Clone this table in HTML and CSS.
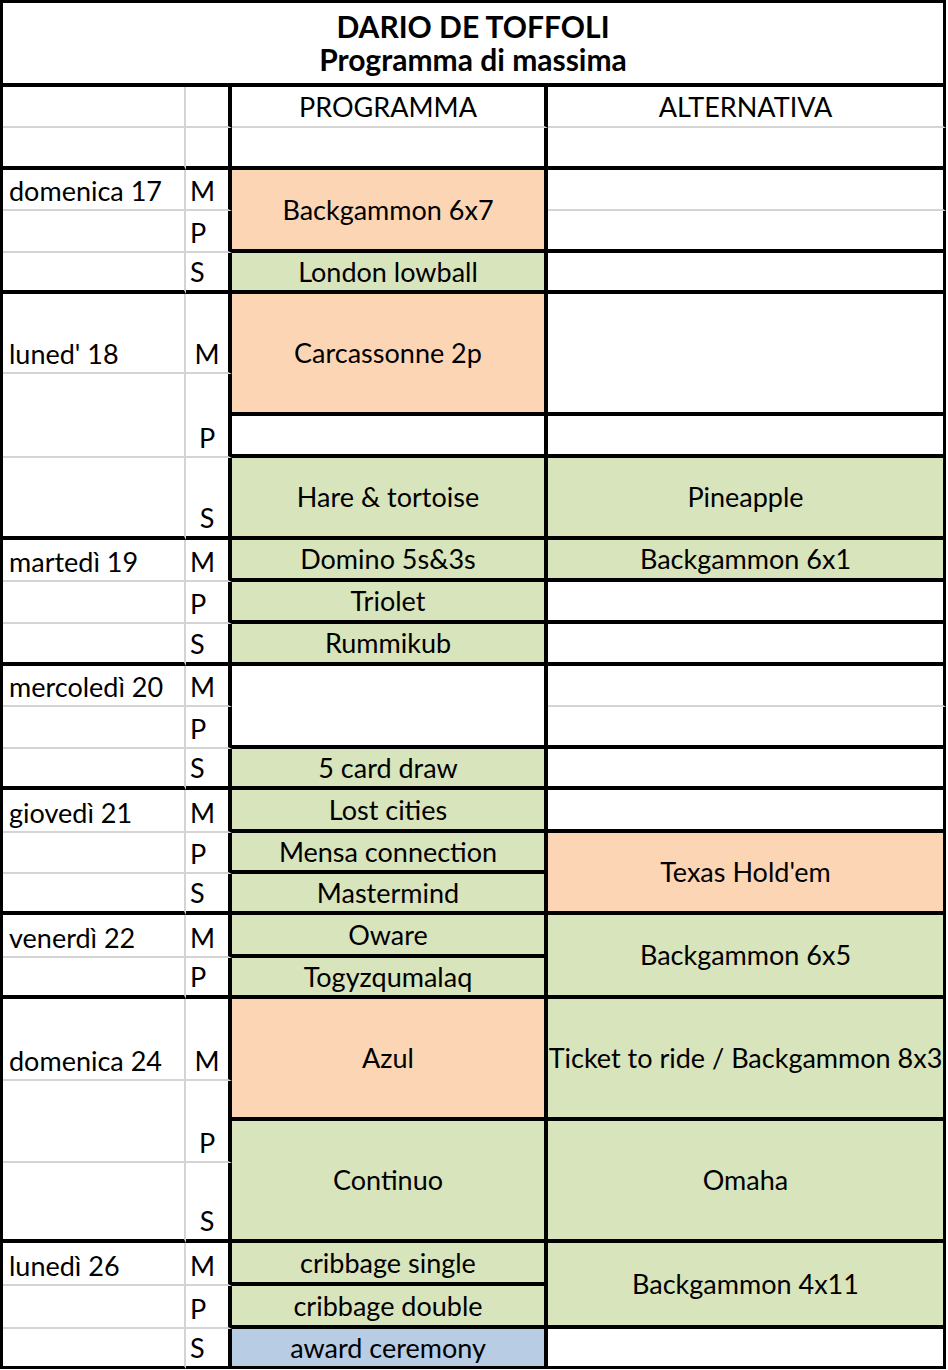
FILE: index.html
```html
<!DOCTYPE html>
<html lang="it">
<head>
<meta charset="utf-8">
<title>Dario De Toffoli - Programma di massima</title>
<link rel="stylesheet" href="styles.css">
</head>
<body>
<div class="sheet">
  <div class="cell title"><span>DARIO DE TOFFOLI</span><span>Programma di massima</span></div>

  <div class="cell a g"></div><div class="cell b g"></div><div class="cell c g ctr">PROGRAMMA</div><div class="cell d g ctr">ALTERNATIVA</div>
  <div class="cell a k"></div><div class="cell b k"></div><div class="cell c k"></div><div class="cell d k"></div>

  <!-- domenica 17 -->
  <div class="cell a g">domenica 17</div><div class="cell b g">M</div><div class="cell c k ctr peach rs2">Backgammon 6x7</div><div class="cell d g"></div>
  <div class="cell a g"></div><div class="cell b g">P</div><div class="cell d k"></div>
  <div class="cell a k"></div><div class="cell b k">S</div><div class="cell c k ctr green">London lowball</div><div class="cell d k"></div>

  <!-- luned' 18 -->
  <div class="cell a g rs2">luned' 18</div><div class="cell b g rs2 mid">M</div><div class="cell c k ctr peach rs3">Carcassonne 2p</div><div class="cell d k rs3"></div>
  <div class="cell a g rs2"></div><div class="cell b g rs2 mid">P</div>
  <div class="cell c k"></div><div class="cell d k"></div>
  <div class="cell a k rs2"></div><div class="cell b k rs2 mid">S</div><div class="cell c k ctr green rs2">Hare &amp; tortoise</div><div class="cell d k ctr green rs2">Pineapple</div>

  <!-- martedì 19 -->
  <div class="cell a g">martedì 19</div><div class="cell b g">M</div><div class="cell c k ctr green">Domino 5s&amp;3s</div><div class="cell d k ctr green">Backgammon 6x1</div>
  <div class="cell a g"></div><div class="cell b g">P</div><div class="cell c k ctr green">Triolet</div><div class="cell d k"></div>
  <div class="cell a k"></div><div class="cell b k">S</div><div class="cell c k ctr green">Rummikub</div><div class="cell d k"></div>

  <!-- mercoledì 20 -->
  <div class="cell a g">mercoledì 20</div><div class="cell b g">M</div><div class="cell c k rs2"></div><div class="cell d g"></div>
  <div class="cell a g"></div><div class="cell b g">P</div><div class="cell d k"></div>
  <div class="cell a k"></div><div class="cell b k">S</div><div class="cell c k ctr green">5 card draw</div><div class="cell d k"></div>

  <!-- giovedì 21 -->
  <div class="cell a g">giovedì 21</div><div class="cell b g">M</div><div class="cell c k ctr green">Lost cities</div><div class="cell d k"></div>
  <div class="cell a g"></div><div class="cell b g">P</div><div class="cell c k ctr green">Mensa connection</div><div class="cell d k ctr peach rs2">Texas Hold'em</div>
  <div class="cell a k"></div><div class="cell b k">S</div><div class="cell c k ctr green">Mastermind</div>

  <!-- venerdì 22 -->
  <div class="cell a g">venerdì 22</div><div class="cell b g">M</div><div class="cell c k ctr green">Oware</div><div class="cell d k ctr green rs2">Backgammon 6x5</div>
  <div class="cell a k"></div><div class="cell b k">P</div><div class="cell c k ctr green">Togyzqumalaq</div>

  <!-- domenica 24 -->
  <div class="cell a g rs2">domenica 24</div><div class="cell b g rs2 mid">M</div><div class="cell c k ctr peach rs3">Azul</div><div class="cell d k ctr green rs3">Ticket to ride / Backgammon 8x3</div>
  <div class="cell a g rs2"></div><div class="cell b g rs2 mid">P</div>
  <div class="cell c k ctr green rs3">Continuo</div><div class="cell d k ctr green rs3">Omaha</div>
  <div class="cell a k rs2"></div><div class="cell b k rs2 mid">S</div>

  <!-- lunedì 26 -->
  <div class="cell a g">lunedì 26</div><div class="cell b g">M</div><div class="cell c k ctr green">cribbage single</div><div class="cell d k ctr green rs2">Backgammon 4x11</div>
  <div class="cell a g"></div><div class="cell b g">P</div><div class="cell c k ctr green">cribbage double</div>
  <div class="cell a e"></div><div class="cell b e">S</div><div class="cell c e ctr blue">award ceremony</div><div class="cell d e"></div>
</div>
</body>
</html>
```

FILE: styles.css
```css
html, body {
  margin: 0;
  padding: 0;
  background: #ffffff;
}

body {
  font-family: "Lato", "Liberation Sans", sans-serif;
  font-size: 27px;
  color: #000;
}

.sheet {
  width: 943px;
  border-left: 3px solid #000;
  border-top: 3px solid #000;
  display: grid;
  grid-template-columns: 183px 46px 316px 398px;
  grid-template-rows:
    84px 41px 42px
    41px 42px 41px
    40px 40px 42px 42px 41px 41px
    42px 42px 42px
    41px 42px 41px
    43px 41px 41px
    43px 41px
    41px 41px 40px 42px 40px 40px
    43px 43px 40px;
}

.cell {
  box-sizing: border-box;
  display: flex;
  align-items: flex-end;
  padding: 0 0 3px 6px;
  line-height: 30px;
  white-space: nowrap;
  overflow: hidden;
  background: #fff;
}

.title {
  grid-column: 1 / -1;
  flex-direction: column;
  align-items: center;
  justify-content: center;
  padding: 0;
  font-size: 30px;
  font-weight: 700;
  line-height: 33px;
  border-right: 3px solid #000;
  border-bottom: 4px solid #000;
}

.a { border-right: 2px solid #d4d4d4; }
.b { border-right: 4px solid #000; padding-left: 4px; }
.c { border-right: 4px solid #000; }
.d { border-right: 3px solid #000; }

.g { border-bottom: 2px solid #d4d4d4; }
.k { border-bottom: 4px solid #000; }
.e { border-bottom: 3px solid #000; }

.ctr {
  align-items: center;
  justify-content: center;
  padding: 0;
}

.mid {
  justify-content: center;
  padding-left: 0;
}

.rs2 { grid-row: span 2; }
.rs3 { grid-row: span 3; }

.peach { background: #fcd5b4; }
.green { background: #d8e4bc; }
.blue { background: #b8cce4; }
```
